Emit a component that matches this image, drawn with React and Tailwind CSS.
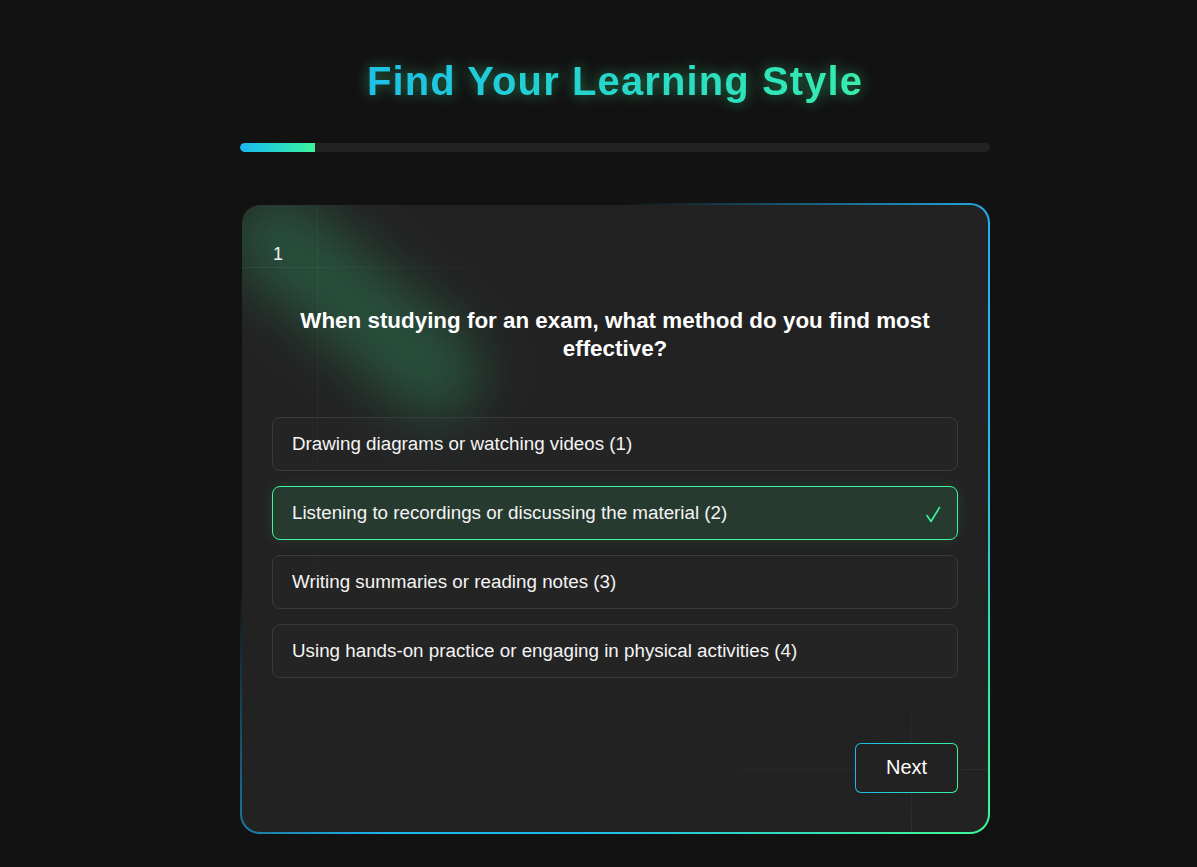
import React from "react";

const options = [
  { text: "Drawing diagrams or watching videos (1)", selected: false },
  { text: "Listening to recordings or discussing the material (2)", selected: true },
  { text: "Writing summaries or reading notes (3)", selected: false },
  { text: "Using hands-on practice or engaging in physical activities (4)", selected: false },
];

function Check() {
  return (
    <svg width="16" height="17" viewBox="0 0 16 17" fill="none" className="mr-[-3px]">
      <path
        d="M2 9.5 L6 15.5 L14.5 1.5"
        stroke="#3ef59a"
        strokeWidth="1.6"
        strokeLinecap="round"
        strokeLinejoin="round"
      />
    </svg>
  );
}

export default function App() {
  return (
    <div
      className="min-h-screen w-full bg-[#121212] text-white"
      style={{ fontFamily: '"Liberation Sans", Arial, sans-serif' }}
    >
      <div className="ml-[240px] w-[750px] pt-[57px] pb-[33px]">
        <h1 className="bg-gradient-to-r from-[#1db4f2] to-[#40f79a] bg-clip-text text-center text-[40px] leading-[48px] font-bold tracking-[1.1px] text-transparent drop-shadow-[0_0_7px_rgba(62,245,154,0.45)]">
          Find Your Learning Style
        </h1>

        <div className="mt-[38px] h-[9px] w-full overflow-hidden rounded-full bg-[#222222]">
          <div className="h-full w-[10%] rounded-l-full bg-gradient-to-r from-[#1fb6f0] to-[#3ef59a]" />
        </div>

        <div className="mt-[51px] rounded-[20px] bg-[linear-gradient(135deg,rgba(31,182,240,0)_28%,#1fb3f0_56%,#1fb8ee_70%,#3ef59a_96%)] p-[2px]">
          <div className="relative overflow-hidden rounded-[18px] bg-[#222222] px-[30px] pt-[36px] pb-[39px]">
            {/* decorative glow streak */}
            <div className="pointer-events-none absolute left-[66px] top-[-50px] h-[300px] w-[95px] rotate-[-50deg] rounded-full bg-[rgba(62,245,154,0.21)] blur-[26px]" />
            {/* faint decorative lines */}
            <div className="pointer-events-none absolute left-0 top-[62px] h-px w-[370px] bg-gradient-to-r from-[rgba(255,255,255,0.05)] to-transparent" />
            <div className="pointer-events-none absolute left-[75px] top-0 h-[520px] w-px bg-gradient-to-b from-[rgba(255,255,255,0.045)] to-transparent" />
            <div className="pointer-events-none absolute right-0 top-[564px] h-px w-[410px] bg-gradient-to-l from-[rgba(255,255,255,0.05)] to-transparent" />
            <div className="pointer-events-none absolute right-[76px] bottom-0 h-[170px] w-px bg-gradient-to-t from-[rgba(255,255,255,0.05)] to-transparent" />

            <div className="relative">
              <div className="pl-px text-[18px] leading-[27px] text-[#f2f2f2]">1</div>

              <h2 className="mt-[39px] text-center text-[22.4px] leading-[28px] font-bold text-white">
                When studying for an exam, what method do you find most effective?
              </h2>

              <div className="mt-[54px] flex flex-col gap-[15px]">
                {options.map((o) =>
                  o.selected ? (
                    <div
                      key={o.text}
                      className="flex h-[54px] items-center justify-between rounded-[8px] border border-[#3ef59a] bg-[#263a30] px-[19px] text-[18.8px] text-[#f4f4f4] shadow-[0_0_14px_rgba(62,245,154,0.12)]"
                    >
                      <span>{o.text}</span>
                      <span className="mt-[3px]">
                        <Check />
                      </span>
                    </div>
                  ) : (
                    <div
                      key={o.text}
                      className="flex h-[54px] items-center rounded-[8px] border border-[#3a3a3a] bg-[rgba(255,255,255,0.01)] px-[19px] text-[18.8px] text-[#f4f4f4]"
                    >
                      {o.text}
                    </div>
                  )
                )}
              </div>

              <div className="mt-[65px] flex justify-end">
                <div className="rounded-[6px] bg-gradient-to-r from-[#1fb6f0] to-[#3ef59a] p-px">
                  <button className="flex h-[48px] w-[101px] items-center justify-center rounded-[5px] bg-[#222222] pb-[2px] text-[20px] text-white">
                    Next
                  </button>
                </div>
              </div>
            </div>
          </div>
        </div>
      </div>
    </div>
  );
}
